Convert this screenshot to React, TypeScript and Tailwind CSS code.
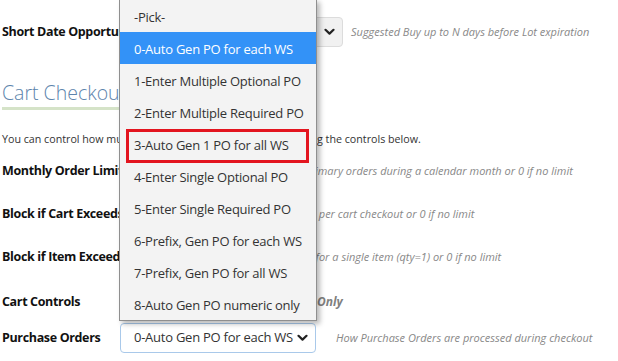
const options = [
  "-Pick-",
  "0-Auto Gen PO for each WS",
  "1-Enter Multiple Optional PO",
  "2-Enter Multiple Required PO",
  "3-Auto Gen 1 PO for all WS",
  "4-Enter Single Optional PO",
  "5-Enter Single Required PO",
  "6-Prefix, Gen PO for each WS",
  "7-Prefix, Gen PO for all WS",
  "8-Auto Gen PO numeric only",
];

const Chevron = () => (
  <svg width="11" height="8" viewBox="0 0 11 8" className="shrink-0">
    <path d="M1.5 1.8 L5.5 5.6 L9.5 1.8" fill="none" stroke="#222" strokeWidth="2.2" strokeLinecap="round" strokeLinejoin="round" />
  </svg>
);

const Row = ({ label, children, desc, className }: { label: string; children?: React.ReactNode; desc?: React.ReactNode; className?: string }) => (
  <div className={`flex items-center ${className ?? ""}`}>
    <div className="w-[118px] shrink-0 whitespace-nowrap text-[12.5px] font-bold tracking-[-0.35px] text-[#111]">{label}</div>
    <div className="flex w-[196px] shrink-0 items-center">{children}</div>
    {desc}
  </div>
);

const Desc = ({ children, className }: { children: React.ReactNode; className?: string }) => (
  <span className={`whitespace-nowrap text-[11px] italic text-[#888] ${className ?? ""}`}>{children}</span>
);

export default function App() {
  return (
    <div className="relative w-[618px] h-[361px] overflow-hidden bg-white font-['Segoe_UI','Open_Sans',sans-serif] text-[#222]">
      <div className="flex flex-col pl-[2px] pt-[17px]">
        {/* Short date */}
        <Row label="Short Date Opportunity" className="h-[30px]" desc={<Desc className="ml-[35px]">Suggested Buy up to N days before Lot expiration</Desc>}>
          <div className="flex h-[30px] w-[223px] shrink-0 items-center justify-end rounded-[4px] border border-[#dcdcdc] bg-[#f1f1f1] pr-[7px]">
            <Chevron />
          </div>
        </Row>

        {/* Heading */}
        <div className="mt-[31px] w-[190px] border-b-[3px] border-[#d5e3c8]">
          <h2 className="h-[29px] text-[19.5px] leading-[29px] font-light text-[#5d84ac] whitespace-nowrap">Cart Checkout</h2>
        </div>

        <p className="mt-[21px] h-[16px] text-[10.7px] leading-[16px] text-[#333] whitespace-nowrap">
          You can control how much is ordered during cart checkout using the controls below.
        </p>

        <Row label="Monthly Order Limit" className="mt-[9px] h-[30px]" desc={<Desc className="ml-[-61px]">Max $ for primary orders during a calendar month or 0 if no limit</Desc>}>
          <div className="h-[28px] w-[80px] rounded-[4px] border border-[#ccc]" />
        </Row>

        <Row label="Block if Cart Exceeds" className="mt-[13px] h-[30px]" desc={<Desc className="ml-[-55px]">Max total $ per cart checkout or 0 if no limit</Desc>}>
          <div className="h-[28px] w-[80px] rounded-[4px] border border-[#ccc]" />
        </Row>

        <Row label="Block if Item Exceeds" className="mt-[13px] h-[30px]" desc={<Desc className="ml-[-33px]">Max $ for a single item (qty=1) or 0 if no limit</Desc>}>
          <div className="h-[28px] w-[80px] rounded-[4px] border border-[#ccc]" />
        </Row>

        <Row label="Cart Controls" className="mt-[15px] h-[30px]" desc={<span className="ml-[-29px] whitespace-nowrap text-[12px] font-bold italic text-[#808080]">View Only</span>}>
          <div className="h-[14px] w-[14px] rounded-[2px] border border-[#999]" />
        </Row>

        <Row label="Purchase Orders" className="mt-[6px] h-[30px]" desc={<Desc className="ml-[20px]">How Purchase Orders are processed during checkout</Desc>}>
          <div className="flex h-[30px] w-[196px] items-center justify-between rounded-[4px] border border-[#a9c9ea] bg-white pl-[13px] pr-[7px] text-[13px] tracking-[-0.25px] text-[#333]">
            <span className="whitespace-nowrap">0-Auto Gen PO for each WS</span>
            <Chevron />
          </div>
        </Row>
      </div>

      {/* open select list */}
      <ul className="absolute left-[119px] top-[-1px] w-[198px] border border-[#8f8f8f] bg-[#f3f3f3] shadow-[3px_3px_5px_rgba(0,0,0,0.28)]">
        {options.map((o, i) => (
          <li
            key={o}
            className={`h-[32px] pl-[14px] text-[13px] tracking-[-0.25px] leading-[32px] whitespace-nowrap ${i === 1 ? "bg-[#3392f7] text-white" : "text-[#333]"}`}
          >
            <span className="relative top-[1px]">{o}</span>
          </li>
        ))}
      </ul>

      {/* annotation */}
      <div className="absolute left-[126px] top-[129px] h-[34px] w-[183px] border-[3px] border-[#e3151f]" />
    </div>
  );
}
